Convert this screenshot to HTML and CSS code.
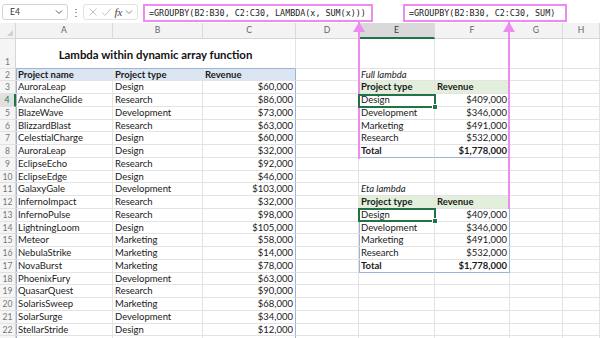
FILE: index.html
```html
<!DOCTYPE html>
<html lang="en">
<head>
  <meta charset="UTF-8">
  <title>GROUPBY with LAMBDA</title>
  <link rel="stylesheet" href="styles.css">
</head>
<body>
<div class="fbar">
  <div class="namebox">
    <span>E4</span>
    <svg width="8" height="6" viewBox="0 0 8 6"><path d="M1 1.5l3 3 3-3" fill="none" stroke="#555" stroke-width="1"/></svg>
  </div>
  <div class="dots">&#8942;</div>
  <div class="fx-group">
    <svg width="10" height="10" viewBox="0 0 10 10"><path d="M1.5 1.5l7 7M8.5 1.5l-7 7" stroke="#c4c4c4" stroke-width="1"/></svg>
    <svg width="11" height="10" viewBox="0 0 11 10"><path d="M1 5.5l3 3 6-7" fill="none" stroke="#c4c4c4" stroke-width="1"/></svg>
    <span class="fx">fx</span>
    <svg width="8" height="6" viewBox="0 0 8 6"><path d="M1 1.5l3 3 3-3" fill="none" stroke="#888" stroke-width="1"/></svg>
  </div>
  <div class="formula f1">=GROUPBY(B2:B30, C2:C30, LAMBDA(x, SUM(x)))</div>
  <div class="formula f2">=GROUPBY(B2:B30, C2:C30, SUM)</div>
</div>

<div class="sheet" id="sheet"></div>

<div class="pointer p1"></div>
<div class="pointer p2"></div>
<div class="select s1"></div>
<div class="select s2"></div>

<script>
  const cols = ["A", "B", "C", "D", "E", "F", "G", "H"];
  const projects = [
    ["AuroraLeap", "Design", "$60,000"],
    ["AvalancheGlide", "Research", "$86,000"],
    ["BlazeWave", "Development", "$73,000"],
    ["BlizzardBlast", "Research", "$63,000"],
    ["CelestialCharge", "Design", "$60,000"],
    ["AuroraLeap", "Design", "$32,000"],
    ["EclipseEcho", "Research", "$92,000"],
    ["EclipseEdge", "Design", "$46,000"],
    ["GalaxyGale", "Development", "$103,000"],
    ["InfernoImpact", "Research", "$32,000"],
    ["InfernoPulse", "Research", "$98,000"],
    ["LightningLoom", "Design", "$105,000"],
    ["Meteor", "Marketing", "$58,000"],
    ["NebulaStrike", "Marketing", "$14,000"],
    ["NovaBurst", "Marketing", "$78,000"],
    ["PhoenixFury", "Development", "$63,000"],
    ["QuasarQuest", "Research", "$90,000"],
    ["SolarisSweep", "Marketing", "$68,000"],
    ["SolarSurge", "Development", "$34,000"],
    ["StellarStride", "Design", "$12,000"]
  ];
  const summary = [
    ["Design", "$409,000"],
    ["Development", "$346,000"],
    ["Marketing", "$491,000"],
    ["Research", "$532,000"],
    ["Total", "$1,778,000"]
  ];

  const cells = {};
  function put(addr, text, cls) {
    cells[addr] = { t: text || "", c: cls || "" };
  }

  put("A2", "Project name", "lh bl");
  put("B2", "Project type", "lh");
  put("C2", "Revenue", "lh br");
  projects.forEach((p, i) => {
    const r = i + 3;
    put("A" + r, p[0], "bl");
    put("B" + r, p[1]);
    put("C" + r, p[2], "num br");
  });
  put("A23", "", "bl");
  put("C23", "", "br");

  function groupTable(top, caption) {
    put("E" + top, caption, "cap");
    put("E" + (top + 1), "Project type", "gh");
    put("F" + (top + 1), "Revenue", "gh");
    summary.forEach((s, i) => {
      const r = top + 2 + i;
      const last = i === summary.length - 1;
      const extra = last ? " b bb" : "";
      put("E" + r, s[0], "bl" + extra);
      put("F" + r, s[1], "num br" + extra);
    });
  }
  groupTable(2, "Full lambda");
  groupTable(11, "Eta lambda");

  let html = '<div class="corner"></div>';
  cols.forEach(c => {
    html += '<div class="colhdr' + (c === "E" ? " on" : "") + '">' + c + '</div>';
  });

  html += '<div class="rowhdr first">1</div>';
  html += '<div class="cell title">Lambda within dynamic array function</div>';
  ["D", "E", "F", "G", "H"].forEach(() => { html += '<div class="cell"></div>'; });

  for (let r = 2; r <= 23; r++) {
    // row 23 only peeks in at the bottom edge, so its number stays hidden
    const label = r < 23 ? r : "";
    html += '<div class="rowhdr' + (r === 4 ? " on" : "") + '">' + label + '</div>';
    cols.forEach(c => {
      const cell = cells[c + r] || { t: "", c: "" };
      html += '<div class="cell ' + cell.c + '">' + cell.t + '</div>';
    });
  }
  document.getElementById("sheet").innerHTML = html;
</script>
</body>
</html>
```

FILE: styles.css
```css
body {
  margin: 0;
  width: 600px;
  height: 338px;
  overflow: hidden;
  position: relative;
  background: #fff;
  font-family: Lato, "Open Sans", sans-serif;
  color: #1a1a1a;
}

/* formula bar */
.fbar {
  height: 23px;
  display: flex;
  align-items: flex-start;
  padding-top: 4px;
  box-sizing: border-box;
  background: #fff;
}

.namebox {
  margin-left: 2px;
  width: 66px;
  height: 16px;
  border: 1px solid #d4d4d4;
  border-radius: 3px;
  box-sizing: border-box;
  display: flex;
  align-items: center;
  justify-content: space-between;
  padding: 0 4px 0 7px;
  font-size: 8.5px;
  color: #333;
}

.dots {
  width: 15px;
  text-align: center;
  font-size: 10px;
  line-height: 16px;
  color: #555;
}

.fx-group {
  width: 55px;
  height: 16px;
  border: 1px solid #e2e2e2;
  border-radius: 3px;
  box-sizing: border-box;
  display: flex;
  align-items: center;
  justify-content: space-around;
  padding: 0 2px;
}

.fx {
  font-family: "Liberation Serif", serif;
  font-style: italic;
  font-size: 11px;
  color: #444;
}

.formula {
  height: 18px;
  border: 2px solid #ee8bee;
  box-sizing: border-box;
  font-family: "DejaVu Sans Mono", monospace;
  font-size: 8.4px;
  line-height: 14px;
  padding-left: 4px;
  color: #222;
  white-space: nowrap;
}

.f1 {
  margin-left: 5px;
  width: 230px;
}

.f2 {
  margin-left: 30px;
  width: 164px;
}

/* grid */
.sheet {
  display: grid;
  grid-template-columns: 16px 97px 90px 93px 63px 76px 75px 53px 1fr;
  grid-template-rows: 15.6px 30px;
  grid-auto-rows: 12.75px;
  font-size: 9.5px;
}

.corner {
  background: #f3f3f3;
  border-right: 1px solid #d6d6d6;
  border-bottom: 1px solid #d6d6d6;
  position: relative;
}

.corner::after {
  content: "";
  position: absolute;
  right: 2px;
  bottom: 2px;
  border-left: 6px solid transparent;
  border-bottom: 6px solid #d0d0d0;
}

.colhdr {
  background: #f3f3f3;
  border-right: 1px solid #dadada;
  border-bottom: 1px solid #d6d6d6;
  color: #666;
  font-size: 8.6px;
  text-align: center;
  line-height: 15px;
  box-sizing: border-box;
}

.colhdr.on {
  background: #d9d9d9;
  color: #3a3a3a;
  border-bottom: 2px solid #217346;
}

.rowhdr {
  background: #f5f5f5;
  border-right: 1px solid #d6d6d6;
  border-bottom: 1px solid #e2e2e2;
  color: #777;
  font-size: 8.6px;
  text-align: center;
  line-height: 12px;
  box-sizing: border-box;
}

.rowhdr.first {
  padding-top: 17px;
}

.rowhdr.on {
  background: #e0e0e0;
  color: #217346;
  border-right: 2px solid #217346;
}

.cell {
  border-right: 1px solid #e3e3e3;
  border-bottom: 1px solid #e3e3e3;
  box-sizing: border-box;
  padding: 0 2px;
  line-height: 12px;
  white-space: nowrap;
  overflow: hidden;
}

.title {
  grid-column: span 3;
  border-bottom: 1px solid #9db4d8;
  display: flex;
  align-items: flex-end;
  justify-content: center;
  padding-bottom: 7px;
  font-weight: bold;
  font-size: 11.4px;
  color: #111;
}

.lh {
  background: #dce6f2;
  font-weight: bold;
}

.gh {
  background: #e2efda;
  font-weight: bold;
}

.cap {
  font-style: italic;
}

.num {
  text-align: right;
}

.b {
  font-weight: bold;
}

.bl {
  box-shadow: inset 1px 0 0 #9db4d8;
}

.br {
  border-right-color: #9db4d8;
}

.bb {
  border-bottom-color: #9db4d8;
}

/* pink callout arrows */
.pointer {
  position: absolute;
  top: 22px;
  width: 2px;
  background: #ee8bee;
}

.pointer::before {
  content: "";
  position: absolute;
  top: 0;
  left: -5px;
  border-left: 6px solid transparent;
  border-right: 6px solid transparent;
  border-bottom: 10px solid #ee8bee;
}

.p1 {
  left: 358px;
  height: 137px;
}

.p2 {
  left: 508px;
  height: 187px;
}

/* active cell outline */
.select {
  position: absolute;
  left: 358px;
  width: 78px;
  height: 14px;
  border: 2px solid #217346;
  box-sizing: border-box;
}

.select::after {
  content: "";
  position: absolute;
  right: -4px;
  bottom: -4px;
  width: 4px;
  height: 4px;
  background: #217346;
  border: 1px solid #fff;
}

.s1 {
  top: 93.5px;
}

.s2 {
  top: 208.2px;
}
```
